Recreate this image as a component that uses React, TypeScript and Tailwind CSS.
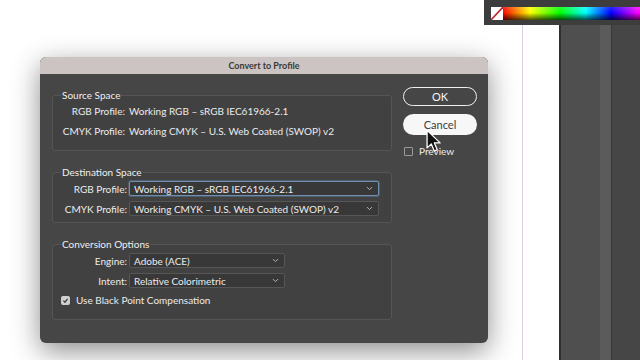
import { ChevronDown } from "lucide-react";

const font = "font-['Lato','Noto_Sans',sans-serif]";

const Select = ({ value, width, focus }: { value: string; width: string; focus?: boolean }) => (
  <div
    className={`flex items-center justify-between h-[15px] pl-[4px] pr-[4px] rounded-[2px] bg-[#383838] text-[#ececec] ${width} ${
      focus ? "border border-[#6d8fb3] shadow-[0_0_0_1px_rgba(109,143,179,0.35)]" : "border border-[#565656]"
    }`}
  >
    <span className="leading-none">{value}</span>
    <ChevronDown size={9} strokeWidth={2.5} className="text-[#bdbdbd]" />
  </div>
);

const Row = ({ label, labelW, children }: { label: string; labelW: string; children: React.ReactNode }) => (
  <div className="flex items-center leading-[12px]">
    <span className={`${labelW} text-right text-[#ececec]`}>{label}</span>
    {children}
  </div>
);

const Group = ({ title, className, children }: { title: string; className?: string; children: React.ReactNode }) => (
  <fieldset className={`border border-[#555555] rounded-[3px] bg-[#414141] ${className ?? ""}`}>
    <legend className="ml-[8px] px-[1px] text-[#f0f0f0] leading-[12px]">{title}</legend>
    {children}
  </fieldset>
);

const Checkbox = ({ checked }: { checked?: boolean }) =>
  checked ? (
    <span className="w-[9px] h-[9px] rounded-[2px] bg-[#cfcfcf] flex items-center justify-center">
      <svg width="7" height="7" viewBox="0 0 10 10">
        <path d="M2 5.2 L4.2 7.4 L8 2.6" fill="none" stroke="#3a3a3a" strokeWidth="1.8" />
      </svg>
    </span>
  ) : (
    <span className="w-[9px] h-[9px] rounded-[1px] border border-[#9a9a9a]" />
  );

export default function App() {
  return (
    <div className={`relative w-[640px] h-[360px] overflow-hidden bg-white ${font} text-[10px]`}>
      {/* document canvas */}
      <div className="flex h-full pt-[25px]">
        <div className="w-[522px]" />
        <div className="w-px bg-[#dccde0]" />
        <div className="w-[36px]" />
        <div className="flex flex-1">
          <div className="w-[2px] bg-[#2f2f2f]" />
          <div className="w-[39px] bg-[#4f4f4f]" />
          <div className="w-[11px] bg-[#5b5b5b]" />
          <div className="w-px bg-[#3a3a3a]" />
          <div className="flex-1 bg-[#464646]" />
        </div>
      </div>

      {/* swatch panel */}
      <div className="absolute top-0 left-[484px] w-[156px] h-[25px] bg-[#3d3d3d] flex items-start pt-[7px] pl-[7px]">
        <svg width="12" height="13" viewBox="0 0 12 13" className="shrink-0">
          <rect width="12" height="13" fill="#fff" />
          <line x1="0" y1="13" x2="12" y2="0" stroke="#c0262d" strokeWidth="1.6" />
        </svg>
        <div className="relative h-[13px] w-[150px] shrink-0 bg-[linear-gradient(90deg,#ff0000_0%,#ffff00_18%,#00ff00_38%,#00ffff_55%,#0000ff_72%,#ff00ff_90%,#ff0000_100%)]">
          <div className="absolute inset-0 bg-[linear-gradient(180deg,rgba(255,255,255,0.15)_0%,rgba(0,0,0,0)_45%,rgba(0,0,0,0.7)_100%)]" />
        </div>
      </div>

      {/* dialog */}
      <div className="absolute left-[40px] top-[57px] w-[448px] h-[286px] rounded-[6px] overflow-hidden bg-[#464646] shadow-[0_8px_28px_rgba(0,0,0,0.45)] flex flex-col">
        <div className="h-[17px] bg-[#cbc4c2] flex items-center justify-center text-[9px] font-bold text-[#3a3a3a]">
          Convert to Profile
        </div>
        <div className="flex pl-[12px] pr-[11px] pt-[13px]">
          <div className="w-[340px] flex flex-col pt-[2px]">
            <Group title="Source Space" className="h-[62px]">
              <div className="flex flex-col gap-[8px] pt-[4px]">
                <Row label="RGB Profile:" labelW="w-[72px]">
                  <span className="ml-[4px] text-[#ececec]">Working RGB – sRGB IEC61966-2.1</span>
                </Row>
                <Row label="CMYK Profile:" labelW="w-[72px]">
                  <span className="ml-[4px] text-[#ececec]">Working CMYK – U.S. Web Coated (SWOP) v2</span>
                </Row>
              </div>
            </Group>
            <Group title="Destination Space" className="mt-[15px] h-[57px]">
              <div className="flex flex-col gap-[5px] pt-[3px]">
                <Row label="RGB Profile:" labelW="w-[74px]">
                  <span className="ml-[2px]" />
                  <Select value="Working RGB – sRGB IEC61966-2.1" width="w-[250px]" focus />
                </Row>
                <Row label="CMYK Profile:" labelW="w-[74px]">
                  <span className="ml-[2px]" />
                  <Select value="Working CMYK – U.S. Web Coated (SWOP) v2" width="w-[250px]" />
                </Row>
              </div>
            </Group>
            <Group title="Conversion Options" className="mt-[15px] h-[82px]">
              <div className="flex flex-col gap-[5px] pt-[3px]">
                <Row label="Engine:" labelW="w-[74px]">
                  <span className="ml-[2px]" />
                  <Select value="Adobe (ACE)" width="w-[156px]" />
                </Row>
                <Row label="Intent:" labelW="w-[74px]">
                  <span className="ml-[2px]" />
                  <Select value="Relative Colorimetric" width="w-[156px]" />
                </Row>
                <div className="flex items-center gap-[6px] pl-[8px] pt-[1px] leading-[12px] text-[#ececec]">
                  <Checkbox checked />
                  <span>Use Black Point Compensation</span>
                </div>
              </div>
            </Group>
          </div>

          <div className="ml-[11px] w-[74px] flex flex-col">
            <button className="h-[19px] rounded-full border-[1.5px] border-[#f0f0f0] text-[#f4f4f4] text-[11px] leading-none">
              OK
            </button>
            <button className="mt-[8px] h-[21px] rounded-full bg-[#f7f7f7] text-[#3c3c3c] text-[11px] leading-none">
              Cancel
            </button>
            <div className="flex items-center gap-[6px] mt-[10px] pl-[1px] leading-[12px] text-[#ececec]">
              <Checkbox />
              <span>Preview</span>
            </div>
          </div>
        </div>
      </div>

      {/* mouse pointer */}
      <svg className="absolute left-[426px] top-[129px]" width="17" height="25" viewBox="0 0 16 23">
        <path
          d="M1 1 L1 17.5 L5 13.8 L7.8 20.5 L10.6 19.3 L7.9 12.8 L13.3 12.8 Z"
          fill="#111"
          stroke="#fff"
          strokeWidth="1.2"
          strokeLinejoin="round"
        />
      </svg>
    </div>
  );
}
